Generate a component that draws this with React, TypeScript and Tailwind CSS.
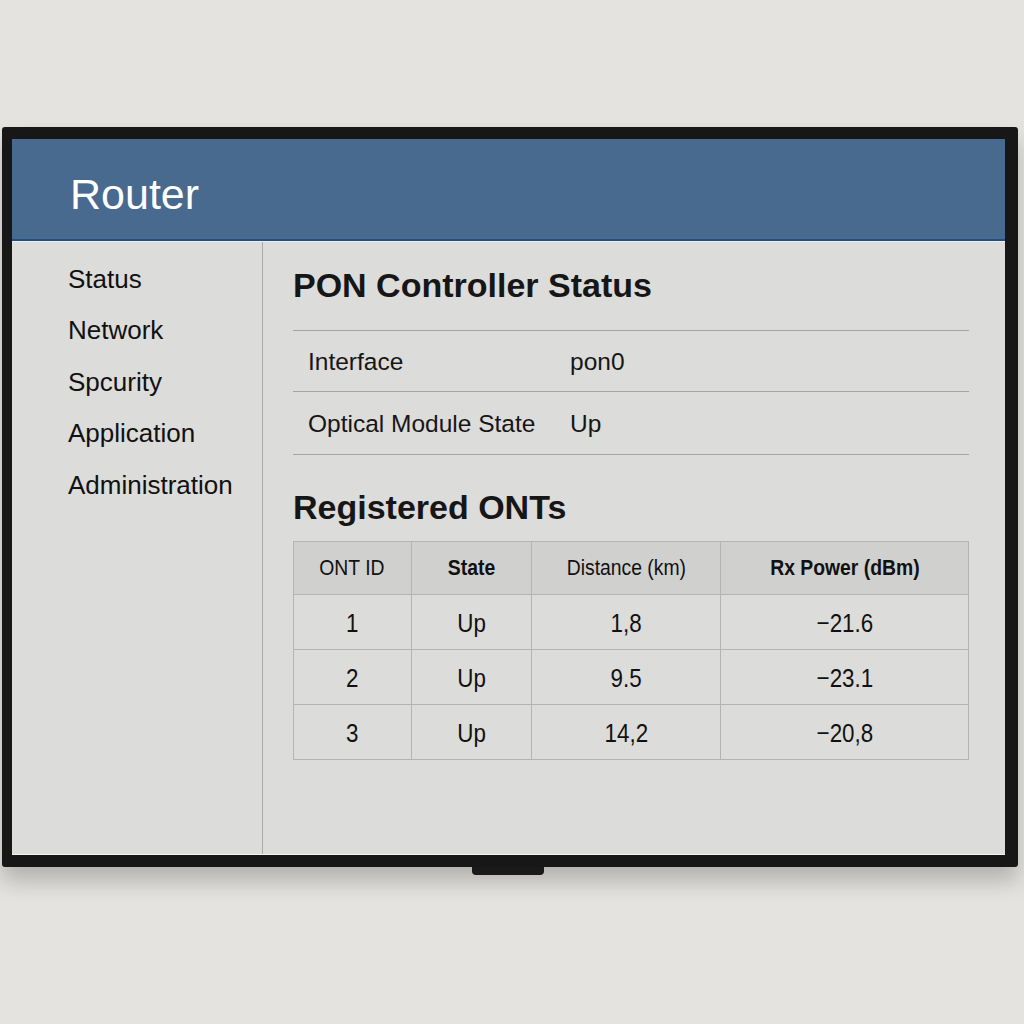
import React from 'react';

const navItems = ['Status', 'Network', 'Spcurity', 'Application', 'Administration'];

const onts = [
  { id: '1', state: 'Up', distance: '1,8', rx: '−21.6' },
  { id: '2', state: 'Up', distance: '9.5', rx: '−23.1' },
  { id: '3', state: 'Up', distance: '14,2', rx: '−20,8' },
];

// condensed look of the table text
const Narrow: React.FC<{ children: React.ReactNode; bold?: boolean }> = ({ children, bold }) => (
  <span className={`inline-block scale-x-[0.86] origin-center whitespace-nowrap ${bold ? 'font-bold' : 'font-normal'}`}>
    {children}
  </span>
);

const App: React.FC = () => {
  return (
    <div
      className="w-full h-[1024px] bg-[#e4e3df] overflow-hidden pt-[127px] pl-[2px]"
      style={{ fontFamily: '"Liberation Sans", Arial, sans-serif' }}
    >
      {/* Monitor */}
      <div className="flex flex-col w-[1016px]">
        <div className="w-[1016px] h-[740px] bg-[#171717] rounded-[3px] pt-[12px] pl-[10px] pr-[13px] pb-[12px] shadow-[0_14px_22px_rgba(0,0,0,0.22)]">
          {/* Screen */}
          <div className="w-full h-full flex flex-col bg-[#dcdcda] border-b border-[#f4f3ef]">
            {/* Header */}
            <div className="h-[102px] shrink-0 bg-[#476a8e] border-b-2 border-[#1f4f86] flex items-center pl-[58px] pt-[10px]">
              <span className="text-white text-[43px] leading-none">Router</span>
            </div>
            <div className="h-px shrink-0 bg-[#eeece6]" />

            <div className="flex flex-1 min-h-0">
              {/* Sidebar */}
              <nav className="w-[251px] shrink-0 border-r border-[#a9a9a9] bg-[#dcdcda] pt-[11px] pl-[56px]">
                {navItems.map((item) => (
                  <div key={item} className="h-[51.5px] flex items-center text-[26px] text-[#111] leading-none">
                    {item}
                  </div>
                ))}
              </nav>

              {/* Main content */}
              <main className="flex-1 pl-[30px] pr-[36px] pt-[23px] text-[#161616]">
                <h1 className="text-[34px] leading-[40px] font-bold">PON Controller Status</h1>

                <div className="mt-[25px] text-[24.5px]">
                  <div className="h-[61px] border-t border-[#a5a5a5] flex items-center pl-[15px] pt-[3px]">
                    <span className="w-[262px]">Interface</span>
                    <span>pon0</span>
                  </div>
                  <div className="h-[64px] border-t border-b border-[#a5a5a5] flex items-center pl-[15px] pt-[3px]">
                    <span className="w-[262px]">Optical Module State</span>
                    <span>Up</span>
                  </div>
                </div>

                <h2 className="mt-[32px] text-[34px] leading-[40px] font-bold">Registered ONTs</h2>

                <table className="mt-[14px] w-[676px] border-collapse text-center text-[#111]">
                  <thead>
                    <tr className="h-[53px] bg-[#d0d0cf] text-[22.5px]">
                      <th className="w-[118px] border border-[#b4b4b4]"><Narrow>ONT ID</Narrow></th>
                      <th className="w-[120px] border border-[#b4b4b4]"><Narrow bold>State</Narrow></th>
                      <th className="w-[190px] border border-[#b4b4b4]"><Narrow>Distance (km)</Narrow></th>
                      <th className="w-[248px] border border-[#b4b4b4]"><Narrow bold>Rx Power (dBm)</Narrow></th>
                    </tr>
                  </thead>
                  <tbody className="text-[26px]">
                    {onts.map((o) => (
                      <tr key={o.id} className="h-[55px]">
                        <td className="border border-[#b4b4b4] pt-[3px]"><Narrow>{o.id}</Narrow></td>
                        <td className="border border-[#b4b4b4] pt-[3px]"><Narrow>{o.state}</Narrow></td>
                        <td className="border border-[#b4b4b4] pt-[3px]"><Narrow>{o.distance}</Narrow></td>
                        <td className="border border-[#b4b4b4] pt-[3px]"><Narrow>{o.rx}</Narrow></td>
                      </tr>
                    ))}
                  </tbody>
                </table>
              </main>
            </div>
          </div>
        </div>
        {/* Stand tab */}
        <div className="self-center ml-[-4px] w-[72px] h-[8px] bg-[#1a1a1a] rounded-b-[4px]" />
      </div>
    </div>
  );
};

export default App;
